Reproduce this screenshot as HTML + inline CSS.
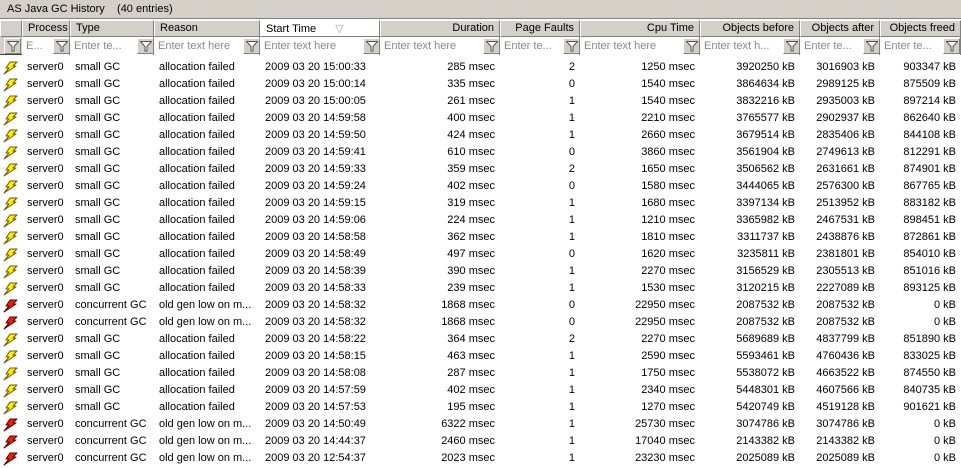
<!DOCTYPE html>
<html><head><meta charset="utf-8"><style>
*{box-sizing:border-box;margin:0;padding:0}
body{width:961px;height:468px;overflow:hidden;background:#fff;font-family:"Liberation Sans",sans-serif;font-size:11px;color:#000;position:relative}
.title{position:absolute;left:0;top:0;width:961px;height:19px;background:#d4d0c8;border-bottom:1px solid #808080;padding:3px 0 0 7px}
.hdr{position:absolute;left:0;top:20px;width:961px;height:17px;background:#d4d0c8}
.flt{position:absolute;left:0;top:37px;width:961px;height:18px;background:#d4d0c8;border-bottom:1px solid #404040}
table{border-collapse:collapse;table-layout:fixed;width:961px;position:absolute;left:0;top:59px}
td{height:17px;padding:0 5px;white-space:nowrap;overflow:hidden;line-height:17px}
td svg{display:block}
.r{text-align:right}
.h{position:absolute;top:0;height:17px;border:1px solid;border-color:#fff #808080 #808080 #fff;padding:1px 5px 0;white-space:nowrap;overflow:hidden}
.f{position:absolute;top:0;height:18px;background:#fff;border-right:1px solid #808080;color:#888;padding:3px 4px 0;white-space:nowrap;overflow:hidden}
.fb{position:absolute;top:1px;width:17px;height:16px;background:#d4d0c8;border:1px solid;border-color:#fff #808080 #808080 #fff}
.fb svg{position:absolute;left:2px;top:1px}
</style></head><body>
<svg width="0" height="0" style="position:absolute"><defs>
<symbol id="y" viewBox="0 0 16 14"><polygon points="8,1 15,1 11,5 14,5 2,13 7,7 4,7" fill="#ffee00" stroke="#6b5a00" stroke-width="1" stroke-linejoin="round"/></symbol>
<symbol id="rd" viewBox="0 0 16 14"><polygon points="8,1 15,1 11,5 14,5 2,13 7,7 4,7" fill="#e82010" stroke="#600000" stroke-width="1" stroke-linejoin="round"/></symbol>
<symbol id="fn" viewBox="0 0 12 12"><path d="M0.5,1.5 H11.5 L7,6.5 V11 L5,11 V6.5 Z" fill="#fff" stroke="#555" stroke-width="1"/></symbol>
</defs></svg>
<div class="title">AS Java GC History &nbsp;&nbsp;&nbsp;(40 entries)</div>
<div class="hdr">
<div class="h" style="left:0;width:22px"></div>
<div class="h" style="left:22px;width:48px">Process</div>
<div class="h" style="left:70px;width:84px">Type</div>
<div class="h" style="left:154px;width:106px">Reason</div>
<div class="h" style="left:260px;width:120px;background:#fff">Start Time <span style="color:#aaa;margin-left:16px">&#9661;</span></div>
<div class="h r" style="left:380px;width:120px">Duration</div>
<div class="h r" style="left:500px;width:80px">Page Faults</div>
<div class="h r" style="left:580px;width:120px">Cpu Time</div>
<div class="h r" style="left:700px;width:100px">Objects before</div>
<div class="h r" style="left:800px;width:80px">Objects after</div>
<div class="h r" style="left:880px;width:81px">Objects freed</div>
</div>
<div class="flt">
<div class="fb" style="left:4px"><svg width="12" height="12"><use href="#fn"/></svg></div>
<div class="f" style="left:22px;width:48px">E...</div><div class="fb" style="left:53px"><svg width="12" height="12"><use href="#fn"/></svg></div>
<div class="f" style="left:70px;width:84px">Enter te...</div><div class="fb" style="left:137px"><svg width="12" height="12"><use href="#fn"/></svg></div>
<div class="f" style="left:154px;width:106px">Enter text here</div><div class="fb" style="left:243px"><svg width="12" height="12"><use href="#fn"/></svg></div>
<div class="f" style="left:260px;width:120px">Enter text here</div><div class="fb" style="left:363px"><svg width="12" height="12"><use href="#fn"/></svg></div>
<div class="f" style="left:380px;width:120px">Enter text here</div><div class="fb" style="left:483px"><svg width="12" height="12"><use href="#fn"/></svg></div>
<div class="f" style="left:500px;width:80px">Enter te...</div><div class="fb" style="left:563px"><svg width="12" height="12"><use href="#fn"/></svg></div>
<div class="f" style="left:580px;width:120px">Enter text here</div><div class="fb" style="left:683px"><svg width="12" height="12"><use href="#fn"/></svg></div>
<div class="f" style="left:700px;width:100px">Enter text h...</div><div class="fb" style="left:783px"><svg width="12" height="12"><use href="#fn"/></svg></div>
<div class="f" style="left:800px;width:80px">Enter te...</div><div class="fb" style="left:863px"><svg width="12" height="12"><use href="#fn"/></svg></div>
<div class="f" style="left:880px;width:81px">Enter te...</div><div class="fb" style="left:943px"><svg width="12" height="12"><use href="#fn"/></svg></div>
</div>
<table>
<colgroup><col style="width:22px"><col style="width:48px"><col style="width:84px"><col style="width:106px"><col style="width:120px"><col style="width:120px"><col style="width:80px"><col style="width:120px"><col style="width:100px"><col style="width:80px"><col style="width:81px"></colgroup>
<tr><td style="padding:0 2px"><svg width="16" height="14"><use href="#y"/></svg></td><td>server0</td><td>small GC</td><td>allocation failed</td><td>2009 03 20 15:00:33</td><td class="r">285 msec</td><td class="r">2</td><td class="r">1250 msec</td><td class="r">3920250 kB</td><td class="r">3016903 kB</td><td class="r">903347 kB</td></tr>
<tr><td style="padding:0 2px"><svg width="16" height="14"><use href="#y"/></svg></td><td>server0</td><td>small GC</td><td>allocation failed</td><td>2009 03 20 15:00:14</td><td class="r">335 msec</td><td class="r">0</td><td class="r">1540 msec</td><td class="r">3864634 kB</td><td class="r">2989125 kB</td><td class="r">875509 kB</td></tr>
<tr><td style="padding:0 2px"><svg width="16" height="14"><use href="#y"/></svg></td><td>server0</td><td>small GC</td><td>allocation failed</td><td>2009 03 20 15:00:05</td><td class="r">261 msec</td><td class="r">1</td><td class="r">1540 msec</td><td class="r">3832216 kB</td><td class="r">2935003 kB</td><td class="r">897214 kB</td></tr>
<tr><td style="padding:0 2px"><svg width="16" height="14"><use href="#y"/></svg></td><td>server0</td><td>small GC</td><td>allocation failed</td><td>2009 03 20 14:59:58</td><td class="r">400 msec</td><td class="r">1</td><td class="r">2210 msec</td><td class="r">3765577 kB</td><td class="r">2902937 kB</td><td class="r">862640 kB</td></tr>
<tr><td style="padding:0 2px"><svg width="16" height="14"><use href="#y"/></svg></td><td>server0</td><td>small GC</td><td>allocation failed</td><td>2009 03 20 14:59:50</td><td class="r">424 msec</td><td class="r">1</td><td class="r">2660 msec</td><td class="r">3679514 kB</td><td class="r">2835406 kB</td><td class="r">844108 kB</td></tr>
<tr><td style="padding:0 2px"><svg width="16" height="14"><use href="#y"/></svg></td><td>server0</td><td>small GC</td><td>allocation failed</td><td>2009 03 20 14:59:41</td><td class="r">610 msec</td><td class="r">0</td><td class="r">3860 msec</td><td class="r">3561904 kB</td><td class="r">2749613 kB</td><td class="r">812291 kB</td></tr>
<tr><td style="padding:0 2px"><svg width="16" height="14"><use href="#y"/></svg></td><td>server0</td><td>small GC</td><td>allocation failed</td><td>2009 03 20 14:59:33</td><td class="r">359 msec</td><td class="r">2</td><td class="r">1650 msec</td><td class="r">3506562 kB</td><td class="r">2631661 kB</td><td class="r">874901 kB</td></tr>
<tr><td style="padding:0 2px"><svg width="16" height="14"><use href="#y"/></svg></td><td>server0</td><td>small GC</td><td>allocation failed</td><td>2009 03 20 14:59:24</td><td class="r">402 msec</td><td class="r">0</td><td class="r">1580 msec</td><td class="r">3444065 kB</td><td class="r">2576300 kB</td><td class="r">867765 kB</td></tr>
<tr><td style="padding:0 2px"><svg width="16" height="14"><use href="#y"/></svg></td><td>server0</td><td>small GC</td><td>allocation failed</td><td>2009 03 20 14:59:15</td><td class="r">319 msec</td><td class="r">1</td><td class="r">1680 msec</td><td class="r">3397134 kB</td><td class="r">2513952 kB</td><td class="r">883182 kB</td></tr>
<tr><td style="padding:0 2px"><svg width="16" height="14"><use href="#y"/></svg></td><td>server0</td><td>small GC</td><td>allocation failed</td><td>2009 03 20 14:59:06</td><td class="r">224 msec</td><td class="r">1</td><td class="r">1210 msec</td><td class="r">3365982 kB</td><td class="r">2467531 kB</td><td class="r">898451 kB</td></tr>
<tr><td style="padding:0 2px"><svg width="16" height="14"><use href="#y"/></svg></td><td>server0</td><td>small GC</td><td>allocation failed</td><td>2009 03 20 14:58:58</td><td class="r">362 msec</td><td class="r">1</td><td class="r">1810 msec</td><td class="r">3311737 kB</td><td class="r">2438876 kB</td><td class="r">872861 kB</td></tr>
<tr><td style="padding:0 2px"><svg width="16" height="14"><use href="#y"/></svg></td><td>server0</td><td>small GC</td><td>allocation failed</td><td>2009 03 20 14:58:49</td><td class="r">497 msec</td><td class="r">0</td><td class="r">1620 msec</td><td class="r">3235811 kB</td><td class="r">2381801 kB</td><td class="r">854010 kB</td></tr>
<tr><td style="padding:0 2px"><svg width="16" height="14"><use href="#y"/></svg></td><td>server0</td><td>small GC</td><td>allocation failed</td><td>2009 03 20 14:58:39</td><td class="r">390 msec</td><td class="r">1</td><td class="r">2270 msec</td><td class="r">3156529 kB</td><td class="r">2305513 kB</td><td class="r">851016 kB</td></tr>
<tr><td style="padding:0 2px"><svg width="16" height="14"><use href="#y"/></svg></td><td>server0</td><td>small GC</td><td>allocation failed</td><td>2009 03 20 14:58:33</td><td class="r">239 msec</td><td class="r">1</td><td class="r">1530 msec</td><td class="r">3120215 kB</td><td class="r">2227089 kB</td><td class="r">893125 kB</td></tr>
<tr><td style="padding:0 2px"><svg width="16" height="14"><use href="#rd"/></svg></td><td>server0</td><td>concurrent GC</td><td>old gen low on m...</td><td>2009 03 20 14:58:32</td><td class="r">1868 msec</td><td class="r">0</td><td class="r">22950 msec</td><td class="r">2087532 kB</td><td class="r">2087532 kB</td><td class="r">0 kB</td></tr>
<tr><td style="padding:0 2px"><svg width="16" height="14"><use href="#rd"/></svg></td><td>server0</td><td>concurrent GC</td><td>old gen low on m...</td><td>2009 03 20 14:58:32</td><td class="r">1868 msec</td><td class="r">0</td><td class="r">22950 msec</td><td class="r">2087532 kB</td><td class="r">2087532 kB</td><td class="r">0 kB</td></tr>
<tr><td style="padding:0 2px"><svg width="16" height="14"><use href="#y"/></svg></td><td>server0</td><td>small GC</td><td>allocation failed</td><td>2009 03 20 14:58:22</td><td class="r">364 msec</td><td class="r">2</td><td class="r">2270 msec</td><td class="r">5689689 kB</td><td class="r">4837799 kB</td><td class="r">851890 kB</td></tr>
<tr><td style="padding:0 2px"><svg width="16" height="14"><use href="#y"/></svg></td><td>server0</td><td>small GC</td><td>allocation failed</td><td>2009 03 20 14:58:15</td><td class="r">463 msec</td><td class="r">1</td><td class="r">2590 msec</td><td class="r">5593461 kB</td><td class="r">4760436 kB</td><td class="r">833025 kB</td></tr>
<tr><td style="padding:0 2px"><svg width="16" height="14"><use href="#y"/></svg></td><td>server0</td><td>small GC</td><td>allocation failed</td><td>2009 03 20 14:58:08</td><td class="r">287 msec</td><td class="r">1</td><td class="r">1750 msec</td><td class="r">5538072 kB</td><td class="r">4663522 kB</td><td class="r">874550 kB</td></tr>
<tr><td style="padding:0 2px"><svg width="16" height="14"><use href="#y"/></svg></td><td>server0</td><td>small GC</td><td>allocation failed</td><td>2009 03 20 14:57:59</td><td class="r">402 msec</td><td class="r">1</td><td class="r">2340 msec</td><td class="r">5448301 kB</td><td class="r">4607566 kB</td><td class="r">840735 kB</td></tr>
<tr><td style="padding:0 2px"><svg width="16" height="14"><use href="#y"/></svg></td><td>server0</td><td>small GC</td><td>allocation failed</td><td>2009 03 20 14:57:53</td><td class="r">195 msec</td><td class="r">1</td><td class="r">1270 msec</td><td class="r">5420749 kB</td><td class="r">4519128 kB</td><td class="r">901621 kB</td></tr>
<tr><td style="padding:0 2px"><svg width="16" height="14"><use href="#rd"/></svg></td><td>server0</td><td>concurrent GC</td><td>old gen low on m...</td><td>2009 03 20 14:50:49</td><td class="r">6322 msec</td><td class="r">1</td><td class="r">25730 msec</td><td class="r">3074786 kB</td><td class="r">3074786 kB</td><td class="r">0 kB</td></tr>
<tr><td style="padding:0 2px"><svg width="16" height="14"><use href="#rd"/></svg></td><td>server0</td><td>concurrent GC</td><td>old gen low on m...</td><td>2009 03 20 14:44:37</td><td class="r">2460 msec</td><td class="r">1</td><td class="r">17040 msec</td><td class="r">2143382 kB</td><td class="r">2143382 kB</td><td class="r">0 kB</td></tr>
<tr><td style="padding:0 2px"><svg width="16" height="14"><use href="#rd"/></svg></td><td>server0</td><td>concurrent GC</td><td>old gen low on m...</td><td>2009 03 20 12:54:37</td><td class="r">2023 msec</td><td class="r">1</td><td class="r">23230 msec</td><td class="r">2025089 kB</td><td class="r">2025089 kB</td><td class="r">0 kB</td></tr>
</table>
</body></html>
